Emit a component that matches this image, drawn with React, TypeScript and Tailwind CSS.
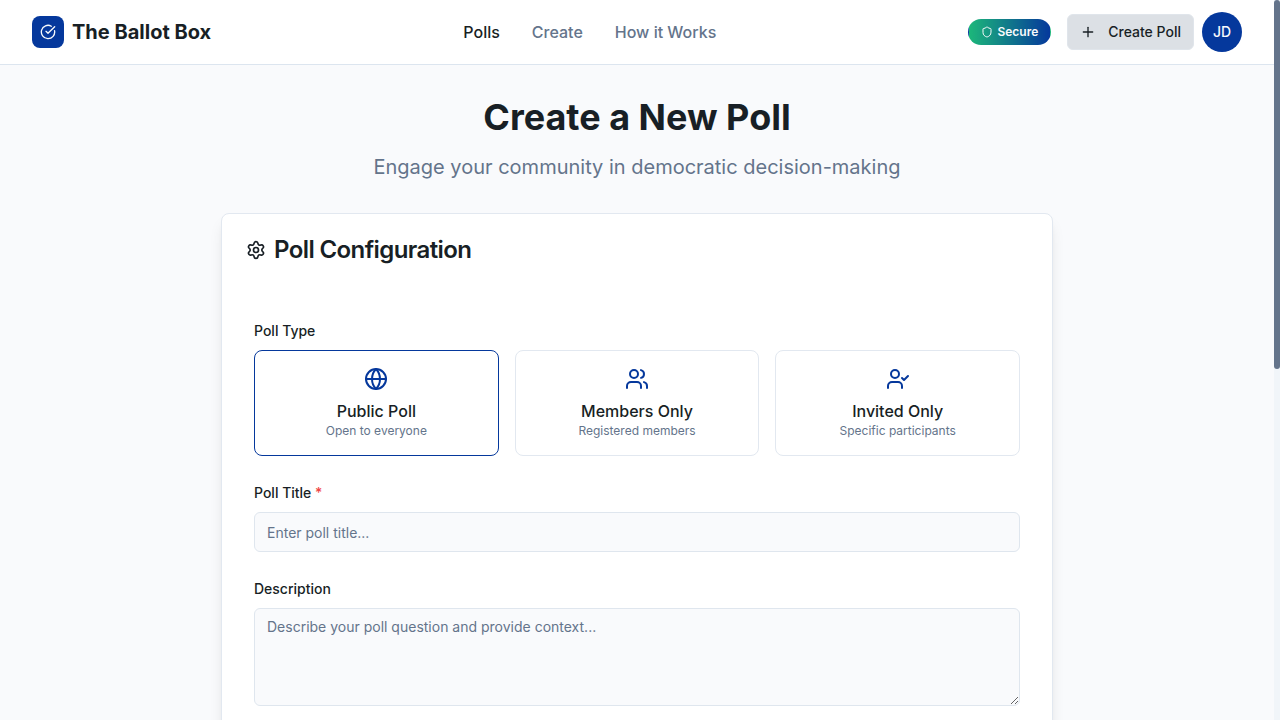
import { CircleCheckBig, Globe, Plus, Settings, Shield, UserCheck, Users } from "lucide-react";

const pollTypes = [
  { title: "Public Poll", note: "Open to everyone", Icon: Globe, selected: true },
  { title: "Members Only", note: "Registered members", Icon: Users, selected: false },
  { title: "Invited Only", note: "Specific participants", Icon: UserCheck, selected: false },
];

function Header() {
  return (
    <header className="h-[65px] shrink-0 border-b border-[#dce5ef] bg-white px-8">
      <div className="flex h-16 items-center justify-between">
        <div className="flex items-center gap-2">
          <div className="flex h-8 w-8 items-center justify-center rounded-lg bg-[#05389c]">
            <CircleCheckBig className="h-4 w-4 text-slate-50" />
          </div>
          <span className="text-xl font-bold">The Ballot Box</span>
        </div>
        <nav className="flex items-center gap-8 font-medium text-[#64748b]">
          <a className="text-[#181f25]">Polls</a>
          <a>Create</a>
          <a>How it Works</a>
        </nav>
        <div className="flex items-center gap-4">
          <div className="flex items-center gap-1 rounded-full border border-transparent bg-[linear-gradient(90deg,#1cb77a,#05389c)] px-3 py-1 text-xs font-semibold text-slate-50">
            <Shield className="h-3 w-3" />
            Secure
          </div>
          <div className="flex items-center gap-2">
            <button className="flex h-9 items-center gap-3 rounded-md border border-[#e0e5eb] bg-[#dce0e5] px-3 text-sm font-medium">
              <Plus className="h-4 w-4" />
              Create Poll
            </button>
            <div className="flex h-10 w-10 items-center justify-center rounded-full bg-[#05389c] text-sm font-medium text-slate-50">
              JD
            </div>
          </div>
        </div>
      </div>
    </header>
  );
}

function PollTypePicker() {
  return (
    <div>
      <div className="mb-2">
        <span className="text-sm leading-none font-medium">Poll Type</span>
      </div>
      <div className="grid grid-cols-3 gap-4">
        {pollTypes.map(({ title, note, Icon, selected }) => (
          <div
            key={title}
            className={`rounded-lg border p-4 text-center ${selected ? "border-[#05389c]" : "border-[#e2e8f0]"}`}
          >
            <Icon className="mx-auto mb-2 h-6 w-6 text-[#05389c]" />
            <div className="font-medium">{title}</div>
            <div className="text-xs text-[#64748b]">{note}</div>
          </div>
        ))}
      </div>
    </div>
  );
}

export default function App() {
  return (
    <div className="flex h-screen overflow-hidden bg-[#f9fafc] font-['Inter',sans-serif] text-[#181f25]">
      <div className="flex min-w-0 flex-1 flex-col overflow-hidden">
        <Header />
        <main className="mx-auto w-[832px] shrink-0 pt-8">
          <div className="mb-8 text-center">
            <h1 className="mb-4 text-4xl font-bold">Create a New Poll</h1>
            <p className="text-xl text-[#64748b]">Engage your community in democratic decision-making</p>
          </div>
          <section className="h-[900px] rounded-lg border border-[#e2e8f0] bg-white shadow-[0_10px_15px_-3px_rgba(0,0,0,0.1),0_4px_6px_-4px_rgba(0,0,0,0.1)]">
            <div className="p-6">
              <h2 className="flex items-center gap-2 text-2xl leading-none font-semibold tracking-tight">
                <Settings className="h-5 w-5" />
                Poll Configuration
              </h2>
            </div>
            <div className="space-y-6 p-8">
              <PollTypePicker />
              <div>
                <div className="mb-2">
                  <label htmlFor="title" className="text-sm leading-none font-medium">
                    Poll Title <span className="text-[#ef4444]">*</span>
                  </label>
                </div>
                <input
                  id="title"
                  placeholder="Enter poll title..."
                  className="block h-10 w-full rounded-md border border-[#dfe6ee] bg-[#f9fafc] px-3 py-2 text-sm placeholder:text-[#64748b]"
                />
              </div>
              <div>
                <div className="mb-2">
                  <label htmlFor="description" className="text-sm leading-none font-medium">
                    Description
                  </label>
                </div>
                <textarea
                  id="description"
                  rows={4}
                  placeholder="Describe your poll question and provide context..."
                  className="block w-full rounded-md border border-[#dfe6ee] bg-[#f9fafc] px-3 py-2 text-sm placeholder:text-[#64748b]"
                />
              </div>
            </div>
          </section>
        </main>
      </div>
      <div className="h-full w-1.5 shrink-0 bg-[#f1f5f9]">
        <div className="h-[369px] rounded-[3px] bg-[#64748b]" />
      </div>
    </div>
  );
}
